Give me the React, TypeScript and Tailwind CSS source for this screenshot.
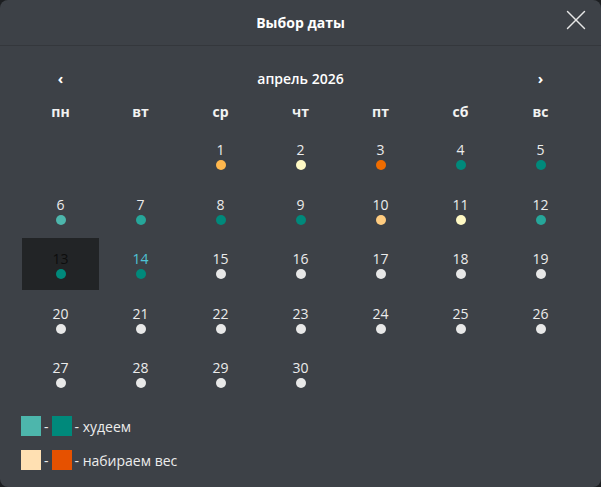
import { X } from 'lucide-react';

type Day = { n: number; dot: string; text?: string; active?: boolean };

const dots: Record<number, string> = {
  1: 'bg-[#ffb74d]',
  2: 'bg-[#fff9c4]',
  3: 'bg-[#ef6c00]',
  4: 'bg-[#00897b]',
  5: 'bg-[#00897b]',
  6: 'bg-[#4db6ac]',
  7: 'bg-[#26a69a]',
  8: 'bg-[#00897b]',
  9: 'bg-[#00897b]',
  10: 'bg-[#ffcc80]',
  11: 'bg-[#fff9c4]',
  12: 'bg-[#26a69a]',
  13: 'bg-[#00897b]',
  14: 'bg-[#00897b]',
};

const weekDays = ['пн', 'вт', 'ср', 'чт', 'пт', 'сб', 'вс'];

export default function App() {
  const days: (Day | null)[] = [null, null];
  for (let n = 1; n <= 30; n++) {
    days.push({
      n,
      dot: dots[n] || 'bg-[#e8e8e8]',
      text: n === 13 ? 'text-[#0d0d0d]' : n === 14 ? 'text-[#4fc3d6]' : 'text-[#ececec]',
      active: n === 13,
    });
  }

  return (
    <div className="w-[601px] h-[487px] bg-[#1c1e21] font-['Open_Sans',sans-serif]">
      <div className="h-full rounded-lg bg-[#3d4147] flex flex-col">
        {/* header */}
        <div className="relative h-[46px] shrink-0 border-b border-[#34373c] flex items-center justify-center">
          <h1 className="text-[14px] font-bold text-white">Выбор даты</h1>
          <button className="absolute right-[8px] top-[3px] text-[#e6e6e6]">
            <X className="w-[34px] h-[34px]" strokeWidth={1} />
          </button>
        </div>

        <div className="px-[22px]">
          {/* month nav */}
          <div className="mt-[18px] h-[28px] grid grid-cols-7 gap-x-[3px] items-center text-white">
            <span className="text-center text-[15px] font-bold">‹</span>
            <span className="col-span-5 text-center text-[14px] font-semibold">апрель 2026</span>
            <span className="text-center text-[15px] font-bold">›</span>
          </div>

          {/* week days */}
          <div className="mt-[8px] h-[22px] grid grid-cols-7 gap-x-[3px] items-center">
            {weekDays.map((d) => (
              <span key={d} className="text-center text-[14px] font-bold text-[#f2f2f2]">{d}</span>
            ))}
          </div>

          {/* days */}
          <div className="mt-[7px] grid grid-cols-7 gap-x-[3px] gap-y-[2.5px]">
            {days.map((d, i) =>
              d ? (
                <div
                  key={i}
                  className={`h-[52px] flex flex-col items-center pt-[11px] ${d.active ? 'bg-[#222426]' : ''}`}
                >
                  <span className={`text-[14px] leading-[20px] ${d.text}`}>{d.n}</span>
                  <span className={`w-[10px] h-[10px] rounded-full ${d.dot}`} />
                </div>
              ) : (
                <div key={i} className="h-[52px]" />
              )
            )}
          </div>

          {/* legend */}
          <div className="mt-[17px] -ml-px flex flex-col gap-[14px] text-[14px] text-[#ececec]">
            <div className="flex items-center h-[20px]">
              <span className="w-[20px] h-[20px] bg-[#4db6ac]" />
              <span className="mx-[3px]">-</span>
              <span className="w-[20px] h-[20px] bg-[#00897b]" />
              <span className="ml-[3px]">- худеем</span>
            </div>
            <div className="flex items-center h-[20px]">
              <span className="w-[20px] h-[20px] bg-[#ffe0b2]" />
              <span className="mx-[3px]">-</span>
              <span className="w-[20px] h-[20px] bg-[#e65100]" />
              <span className="ml-[3px]">- набираем вес</span>
            </div>
          </div>
        </div>
      </div>
    </div>
  );
}
